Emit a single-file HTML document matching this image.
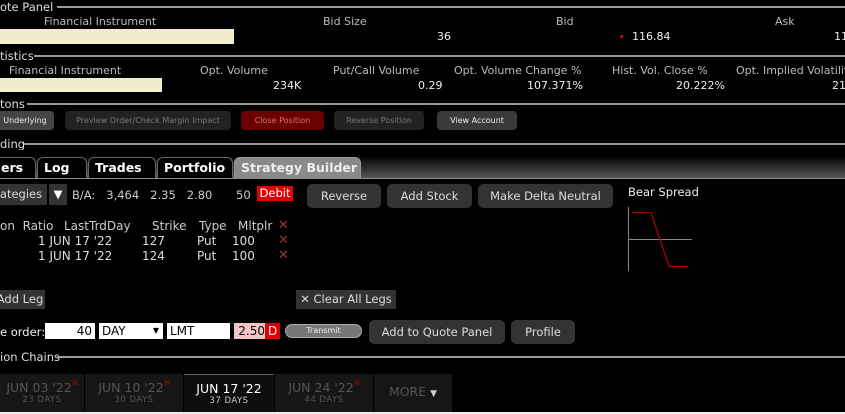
<!DOCTYPE html>
<html><head><style>
*{margin:0;padding:0;box-sizing:border-box}
body{width:845px;height:414px;background:#000;color:#ddd;font-family:"DejaVu Sans","Liberation Sans",sans-serif;font-size:11px;position:relative;overflow:hidden}
.a{position:absolute;white-space:nowrap}
.t{font-size:11.5px;color:#ddd}
.ln{position:absolute;height:2px;background:#9a9a9a;right:0}
.h{color:#bbb;font-size:11px}
.v{color:#eee;font-size:11px}
.r{color:#ddd;font-size:12px}
.cream{position:absolute;background:#efedcd}
.sb{position:absolute;border-radius:4px;font-size:8px;text-align:center;line-height:19px}
.b{position:absolute;background:#333;border-radius:5px;color:#ddd;font-size:11.5px;text-align:center}
.tab{position:absolute;top:157px;height:22px;background:#000;border:1px solid #666;border-bottom:none;border-radius:6px 6px 0 0;color:#fff;font-weight:bold;font-size:12.5px;padding-left:6px;line-height:20px}
.inp{position:absolute;top:323px;height:16px;background:#fff;color:#000;font-size:12px;line-height:16px;padding:0 3px}
.dt{position:absolute;top:374px;height:38px;background:#161616;text-align:center;color:#555;font-size:12.5px}
.dt small{display:block;font-size:8.5px;letter-spacing:.5px}
.w{color:#b00;font-size:6px;vertical-align:top}
.x{position:absolute;left:278px;color:#933;font-weight:bold;font-size:13px}
</style></head><body>
<div class="a t" style="left:0;top:0">ote Panel</div><div class="ln" style="left:57px;top:6px"></div>
<div class="a h" style="left:44px;top:15px">Financial Instrument</div>
<div class="a h" style="left:323px;top:15px">Bid Size</div>
<div class="a h" style="left:556px;top:15px">Bid</div>
<div class="a h" style="left:775px;top:15px">Ask</div>
<div class="cream" style="left:0;top:29px;width:234px;height:15px"></div>
<div class="a v" style="left:437px;top:30px">36</div>
<div class="a" style="left:620px;top:35px;width:3px;height:3px;background:#d00;border-radius:50%"></div>
<div class="a v" style="left:632px;top:30px">116.84</div>
<div class="a v" style="left:834px;top:30px">11</div>

<div class="a t" style="left:0;top:49px">tistics</div><div class="ln" style="left:34px;top:55px"></div>
<div class="a h" style="left:9px;top:64px">Financial Instrument</div>
<div class="a h" style="left:200px;top:64px">Opt. Volume</div>
<div class="a h" style="left:333px;top:64px">Put/Call Volume</div>
<div class="a h" style="left:454px;top:64px">Opt. Volume Change %</div>
<div class="a h" style="left:612px;top:64px">Hist. Vol. Close %</div>
<div class="a h" style="left:736px;top:64px">Opt. Implied Volatility</div>
<div class="cream" style="left:0;top:78px;width:162px;height:14px"></div>
<div class="a v" style="left:273px;top:79px">234K</div>
<div class="a v" style="left:418px;top:79px">0.29</div>
<div class="a v" style="left:527px;top:79px">107.371%</div>
<div class="a v" style="left:676px;top:79px">20.222%</div>
<div class="a v" style="left:832px;top:79px">21</div>

<div class="a t" style="left:0;top:97px">tons</div><div class="ln" style="left:27px;top:103px"></div>
<div class="sb" style="left:-4px;top:111px;width:58px;height:19px;background:#444;color:#eee">Underlying</div>
<div class="sb" style="left:65px;top:111px;width:166px;height:19px;background:#222;color:#777">Preview Order/Check Margin Impact</div>
<div class="sb" style="left:241px;top:111px;width:83px;height:19px;background:#6a0000;color:#c77">Close Position</div>
<div class="sb" style="left:334px;top:111px;width:90px;height:19px;background:#222;color:#777">Reverse Position</div>
<div class="sb" style="left:437px;top:111px;width:80px;height:19px;background:#3a3a3a;color:#eee">View Account</div>

<div class="a t" style="left:0;top:137px">ding</div><div class="ln" style="left:24px;top:143px"></div>
<div class="a" style="left:0;top:150px;width:845px;height:29px;background:linear-gradient(#000,#000 20%,#5a5a5a)"></div>
<div class="tab" style="left:-10px;width:46px;padding-left:10px">ers</div>
<div class="tab" style="left:37px;width:50px">Log</div>
<div class="tab" style="left:88px;width:68px">Trades</div>
<div class="tab" style="left:157px;width:76px">Portfolio</div>
<div class="tab" style="left:234px;width:127px;background:#8a8a8a;border-color:#999;color:#eee">Strategy Builder</div>
<div class="a" style="left:0;top:178px;width:845px;height:1px;background:#888"></div>

<div class="b" style="left:-5px;top:184px;width:52px;height:21px;line-height:21px;border-radius:0">ategies</div>
<div class="b" style="left:49px;top:184px;width:18px;height:21px;line-height:21px;border-radius:0;color:#fff">▼</div>
<div class="a v" style="left:72px;top:188px;font-size:11.5px;color:#ccc">B/A:&nbsp;&nbsp; 3,464&nbsp;&nbsp; 2.35&nbsp;&nbsp; 2.80</div>
<div class="a v" style="left:236px;top:188px;font-size:11.5px;color:#ccc">50</div>
<div class="a" style="left:257px;top:186px;width:36px;height:15px;background:#e00000;color:#fff;font-size:11.5px;text-align:center;line-height:15px">Debit</div>
<div class="b" style="left:307px;top:184px;width:74px;height:24px;line-height:24px">Reverse</div>
<div class="b" style="left:387px;top:184px;width:85px;height:24px;line-height:24px">Add Stock</div>
<div class="b" style="left:478px;top:184px;width:135px;height:24px;line-height:24px">Make Delta Neutral</div>
<div class="a" style="left:628px;top:185px;font-size:11.5px;color:#eee">Bear Spread</div>
<svg class="a" style="left:620px;top:200px" width="80" height="80"><line x1="8.5" y1="7" x2="8.5" y2="71" stroke="#888"/><line x1="8" y1="39.5" x2="72" y2="39.5" stroke="#888"/><path d="M12 12.5H31L49 66.5H68" fill="none" stroke="#a00" stroke-width="1.3"/></svg>

<div class="a r" style="left:0;top:219px;color:#ccc">on&nbsp; Ratio</div>
<div class="a r" style="left:64px;top:219px;color:#ccc">LastTrdDay</div>
<div class="a r" style="left:152px;top:219px;color:#ccc">Strike</div>
<div class="a r" style="left:199px;top:219px;color:#ccc">Type</div>
<div class="a r" style="left:238px;top:219px;color:#ccc">Mltplr</div>
<div class="x" style="top:218px">✕</div>
<div class="a r" style="left:38px;top:234px">1 JUN 17 '22</div><div class="a r" style="left:142px;top:234px">127</div><div class="a r" style="left:197px;top:234px">Put</div><div class="a r" style="left:232px;top:234px">100</div><div class="x" style="top:233px">✕</div>
<div class="a r" style="left:38px;top:249px">1 JUN 17 '22</div><div class="a r" style="left:142px;top:249px">124</div><div class="a r" style="left:197px;top:249px">Put</div><div class="a r" style="left:232px;top:249px">100</div><div class="x" style="top:248px">✕</div>

<div class="b" style="left:-5px;top:290px;width:50px;height:19px;line-height:19px;border-radius:0">Add Leg</div>
<div class="b" style="left:296px;top:290px;width:100px;height:19px;line-height:19px;border-radius:0">✕ Clear All Legs</div>

<div class="a v" style="left:0;top:325px;font-size:11.5px">e order:</div>
<div class="inp" style="left:45px;width:50px;text-align:right">40</div>
<div class="inp" style="left:99px;width:64px">DAY<span style="position:absolute;right:4px;font-size:8px">▼</span></div>
<div class="inp" style="left:167px;width:63px">LMT</div>
<div class="inp" style="left:234px;width:32px;background:#f6c6c6;text-align:right;padding-right:1px">2.50</div>
<div class="inp" style="left:265px;width:15px;background:#e00000;color:#fff">D</div>
<div class="a" style="left:285px;top:324px;width:77px;height:14px;background:#777;border:1px solid #aaa;border-radius:7px;font-size:8px;color:#eee;text-align:center;line-height:12px">Transmit</div>
<div class="b" style="left:369px;top:320px;width:136px;height:24px;line-height:24px">Add to Quote Panel</div>
<div class="b" style="left:511px;top:320px;width:64px;height:24px;line-height:24px">Profile</div>

<div class="a t" style="left:0;top:350px">ion Chains</div><div class="ln" style="left:57px;top:356px"></div>
<div class="dt" style="left:0;width:84px;padding-top:6px">JUN 03 '22<span class="w">W</span><small>23 DAYS</small></div>
<div class="dt" style="left:85px;width:98px;padding-top:6px">JUN 10 '22<span class="w">W</span><small>30 DAYS</small></div>
<div class="dt" style="left:184px;width:90px;padding-top:6px;background:#0d0d0d;color:#fff;border-top:1px solid #666">JUN 17 '22<small style="color:#ccc">37 DAYS</small></div>
<div class="dt" style="left:275px;width:98px;padding-top:6px">JUN 24 '22<span class="w">W</span><small>44 DAYS</small></div>
<div class="dt" style="left:374px;width:78px;line-height:36px">MORE <span style="color:#ccc;font-size:9px">▼</span></div>
<div class="a" style="left:0;top:412px;width:845px;height:2px;background:#eee"></div>
</body></html>
